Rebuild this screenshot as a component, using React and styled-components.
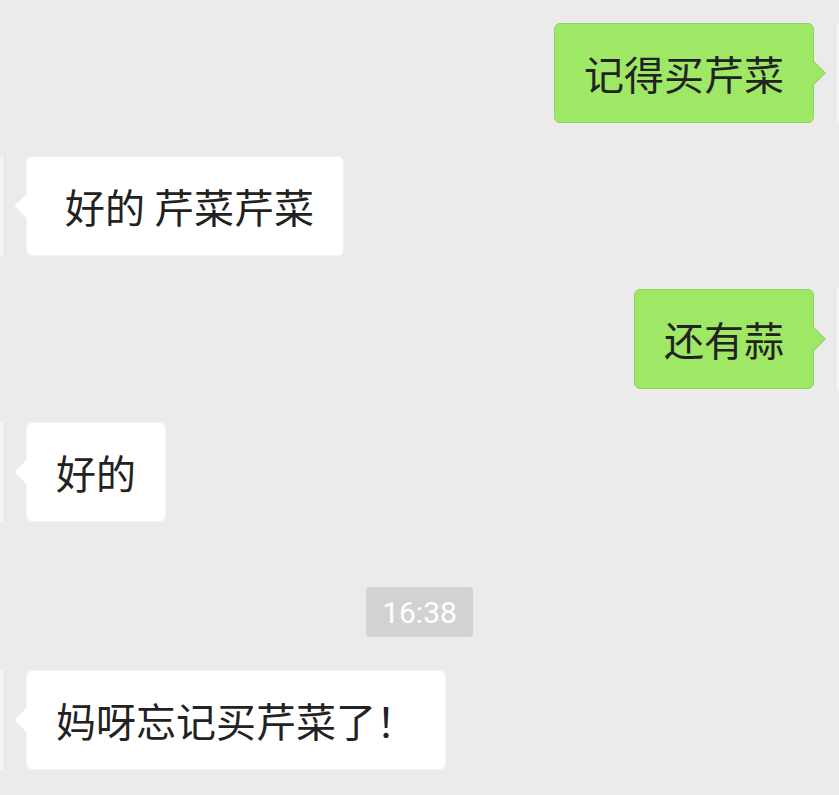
import React from "react"
import styled, { createGlobalStyle, css } from "styled-components"

const messages = [
  { id: 1, mine: true, text: "记得买芹菜" },
  { id: 2, mine: false, text: " 好的 芹菜芹菜" },
  { id: 3, mine: true, text: "还有蒜" },
  { id: 4, mine: false, text: "好的" },
  { id: 5, time: "16:38" },
  { id: 6, mine: false, text: "妈呀忘记买芹菜了！" },
]

const App = () => {
  return (
    <>
      <GlobalStyle />
      <Chat>
        {messages.map(msg =>
          msg.time ? (
            <TimeRow key={msg.id}>
              <Time>{msg.time}</Time>
            </TimeRow>
          ) : (
            <Row key={msg.id} mine={msg.mine}>
              {!msg.mine && <Avatar />}
              <Bubble mine={msg.mine}>{msg.text}</Bubble>
              {msg.mine && <Avatar mine />}
            </Row>
          )
        )}
      </Chat>
    </>
  )
}

export default App

const GlobalStyle = createGlobalStyle`
  html, body {
    margin: 0;
    padding: 0;
    background: #ebebeb;
  }
  body {
    font-family: "Noto Sans CJK SC", "Noto Sans", sans-serif;
  }
`

const Chat = styled.div`
  width: 839px;
  height: 795px;
  box-sizing: border-box;
  padding-top: 23px;
  display: flex;
  flex-direction: column;
  gap: 33px;
  background: #ebebeb;
  overflow: hidden;
`

const Row = styled.div`
  display: flex;
  align-items: stretch;
  justify-content: ${props => (props.mine ? "flex-end" : "flex-start")};
`

const Avatar = styled.div`
  width: 4px;
  background: #f4f4f4;
  ${props =>
    props.mine
      ? css`
          margin-left: 21px;
          width: 3px;
          border-left: 1px solid #e2e2e2;
        `
      : css`
          margin-right: 21px;
          border-right: 1px solid #e0e0e0;
        `}
`

const Bubble = styled.div`
  position: relative;
  box-sizing: border-box;
  height: 100px;
  padding: 0 29px;
  display: flex;
  align-items: center;
  white-space: pre;
  font-size: 40px;
  line-height: 56px;
  color: #222222;
  border-radius: 6px;
  background: ${props => (props.mine ? "#9fe865" : "#ffffff")};
  border: 1px solid ${props => (props.mine ? "#8fd45c" : "#f2f2f2")};

  &::before {
    content: "";
    position: absolute;
    top: 50%;
    width: 17px;
    height: 17px;
    background: inherit;
    transform: translateY(-50%) rotate(45deg);
    ${props =>
      props.mine
        ? css`
            right: -9px;
            border-top: 1px solid #8fd45c;
            border-right: 1px solid #8fd45c;
          `
        : css`
            left: -9px;
          `}
  }
`

const TimeRow = styled.div`
  display: flex;
  justify-content: center;
  margin-top: 32px;
`

const Time = styled.div`
  padding: 0 16px;
  height: 50px;
  display: flex;
  align-items: center;
  border-radius: 4px;
  background: #d2d2d2;
  color: #ffffff;
  font-family: Roboto, "Liberation Sans", sans-serif;
  font-size: 30px;
`
